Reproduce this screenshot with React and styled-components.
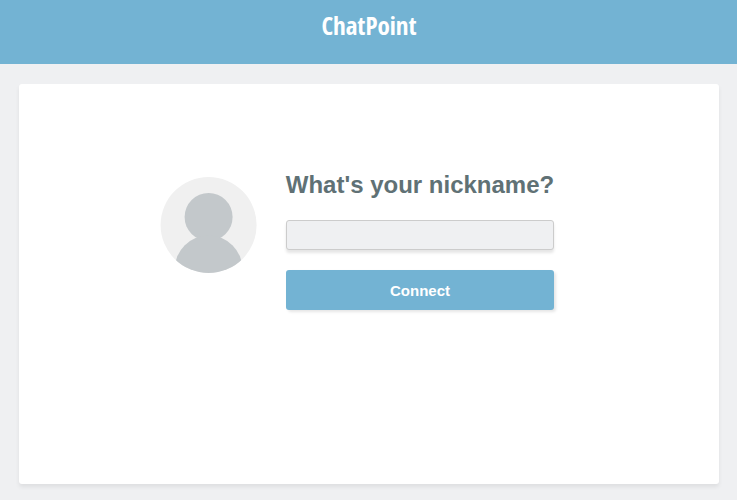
import React from 'react';
import styled, { createGlobalStyle } from 'styled-components';

const GlobalStyle = createGlobalStyle`
  * {
    box-sizing: border-box;
  }

  body {
    margin: 0;
    background-color: #eff0f2;
    color: #607175;
    font-family: 'Liberation Sans', Arial, sans-serif;
  }
`;

const Header = styled.header`
  height: 64px;
  padding: 8px 0 0 1px;
  background-color: #73b3d3;
  text-align: center;
`;

const Logo = styled.h1`
  margin: 0;
  color: #fff;
  font-family: 'Open Sans Condensed', 'Open Sans', sans-serif;
  font-size: 25px;
  font-stretch: condensed;
  font-weight: 700;
  line-height: 34px;
`;

const Panel = styled.main`
  display: flex;
  align-items: flex-start;
  justify-content: center;
  gap: 28px;
  min-height: 400px;
  margin: 20px 18px 16px 19px;
  padding: 86px 48px 24px 24px;
  border-radius: 3px;
  background-color: #fff;
  box-shadow: 0 3px 4px rgba(0, 0, 0, 0.07);
`;

const StyledAvatar = styled.svg`
  flex: none;
  width: 98px;
  height: 98px;
  margin-top: 6px;
`;

function Avatar(props) {
  return (
    <StyledAvatar viewBox="0 0 98 98" aria-hidden="true" {...props}>
      <defs>
        <clipPath id="avatar-clip">
          <circle cx={48.6} cy={49} r={48} />
        </clipPath>
      </defs>
      <circle cx={48.6} cy={49} r={48} fill="#f0f0f0" />
      <g clipPath="url(#avatar-clip)" fill="#c3c8cb">
        <circle cx={48.6} cy={41} r={24} />
        <circle cx={48.6} cy={93.5} r={34} />
      </g>
    </StyledAvatar>
  );
}

const Form = styled.form`
  display: flex;
  flex-direction: column;
  gap: 20px;
`;

const Label = styled.label`
  font-size: 24px;
  font-weight: 700;
  line-height: 30px;
`;

const Input = styled.input`
  width: 100%;
  height: 30px;
  padding: 0 8px;
  border: 1px solid #ccc;
  border-radius: 3px;
  background-color: #eff0f2;
  box-shadow: 0 3px 3px rgba(0, 0, 0, 0.1);
  color: inherit;
  font: inherit;
  font-size: 15px;
`;

const Button = styled.button`
  height: 40px;
  padding: 0;
  border: 0;
  border-radius: 3px;
  background-color: #73b3d3;
  box-shadow: 2px 2px 3px rgba(0, 0, 0, 0.1);
  color: #fff;
  font: inherit;
  font-size: 15px;
  font-weight: 700;
  cursor: pointer;
`;

export default function App() {
  return (
    <>
      <GlobalStyle />
      <Header>
        <Logo>ChatPoint</Logo>
      </Header>
      <Panel>
        <Avatar />
        <Form onSubmit={(e) => e.preventDefault()}>
          <Label htmlFor="nickname">What's your nickname?</Label>
          <Input type="text" id="nickname" name="nickname" />
          <Button type="submit">Connect</Button>
        </Form>
      </Panel>
    </>
  );
}
